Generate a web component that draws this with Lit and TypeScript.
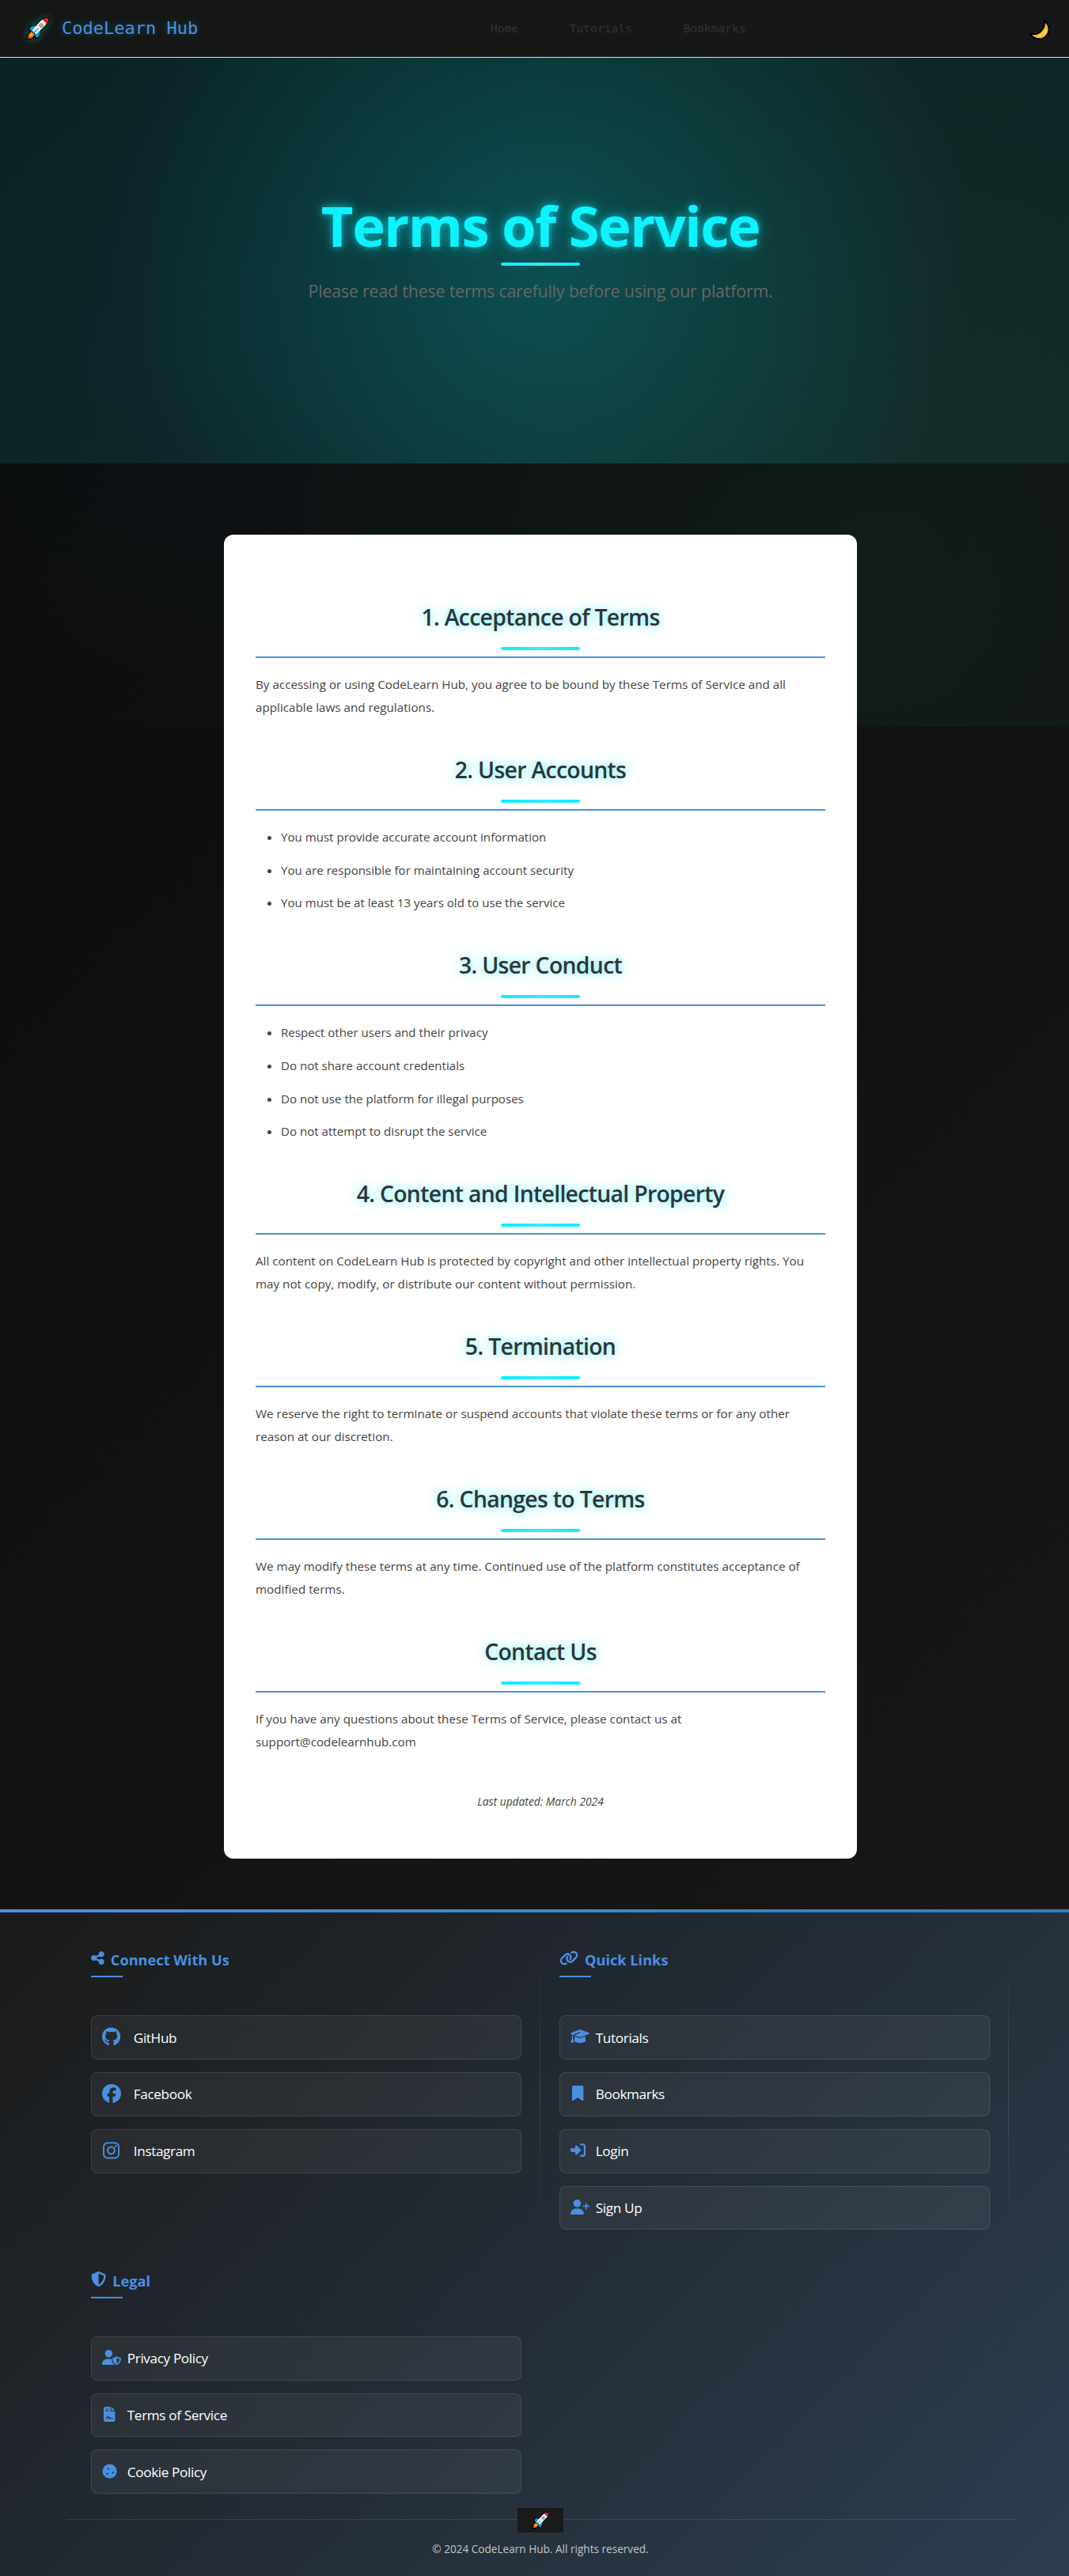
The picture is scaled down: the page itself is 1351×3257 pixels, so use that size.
import { LitElement, html, css, svg } from "lit";
import { customElement, property } from "lit/decorators.js";

interface Glyph {
  w: number;
  d: string;
}

const GLYPHS: Record<string, Glyph> = {
  share: {
    w: 448,
    d: "M352 224c53 0 96-43 96-96s-43-96-96-96s-96 43-96 96c0 4 .2 8 .7 11.9l-94.1 47C145.4 170.2 121.9 160 96 160c-53 0-96 43-96 96s43 96 96 96c25.9 0 49.4-10.2 66.6-26.9l94.1 47c-.5 3.9-.7 7.8-.7 11.9c0 53 43 96 96 96s96-43 96-96s-43-96-96-96c-25.9 0-49.4 10.2-66.6 26.9l-94.1-47c.5-3.9 .7-7.8 .7-11.9s-.2-8-.7-11.9l94.1-47C302.6 213.8 326.1 224 352 224z",
  },
  link: {
    w: 640,
    d: "M579.8 267.7c56.5-56.5 56.5-148 0-204.5c-50-50-128.8-56.5-186.3-15.4l-1.6 1.1c-14.4 10.3-17.7 30.3-7.4 44.6s30.3 17.7 44.6 7.4l1.6-1.1c32.1-22.9 76-19.3 103.8 8.6c31.5 31.5 31.5 82.5 0 114L422.3 334.8c-31.5 31.5-82.5 31.5-114 0c-27.9-27.9-31.5-71.8-8.6-103.8l1.1-1.6c10.3-14.4 6.9-34.4-7.4-44.6s-34.4-6.9-44.6 7.4l-1.1 1.6C206.5 251.2 213 330 263 380c56.5 56.5 148 56.5 204.5 0L579.8 267.7zM60.2 244.3c-56.5 56.5-56.5 148 0 204.5c50 50 128.8 56.5 186.3 15.4l1.6-1.1c14.4-10.3 17.7-30.3 7.4-44.6s-30.3-17.7-44.6-7.4l-1.6 1.1c-32.1 22.9-76 19.3-103.8-8.6C74 372 74 321 105.5 289.5L217.7 177.2c31.5-31.5 82.5-31.5 114 0c27.9 27.9 31.5 71.8 8.6 103.9l-1.1 1.6c-10.3 14.4-6.9 34.4 7.4 44.6s34.4 6.9 44.6-7.4l1.1-1.6C433.5 260.8 427 182 377 132c-56.5-56.5-148-56.5-204.5 0L60.2 244.3z",
  },
  shield: {
    w: 512,
    d: "M256 0c4.6 0 9.2 1 13.4 2.9L457.7 82.8c22 9.3 38.4 31 38.3 57.2c-.5 99.2-41.3 280.7-213.6 363.2c-16.7 8-36.1 8-52.8 0C57.3 420.7 16.5 239.2 16 140c-.1-26.2 16.3-47.9 38.3-57.2L242.7 2.9C246.8 1 251.4 0 256 0zm0 66.8V444.8C394 378 431.1 230.1 432 141.4L256 66.8l0 0z",
  },
  github: {
    w: 496,
    d: "M165.9 397.4c0 2-2.3 3.6-5.2 3.6-3.3.3-5.6-1.3-5.6-3.6 0-2 2.3-3.6 5.2-3.6 3-.3 5.6 1.3 5.6 3.6zm-31.1-4.5c-.7 2 1.3 4.3 4.3 4.9 2.6 1 5.6 0 6.2-2s-1.3-4.3-4.3-5.2c-2.6-.7-5.5.3-6.2 2.3zm44.2-1.7c-2.9.7-4.9 2.6-4.6 4.9.3 2 2.9 3.3 5.9 2.6 2.9-.7 4.9-2.6 4.6-4.6-.3-1.9-3-3.2-5.9-2.9zM244.8 8C106.1 8 0 113.3 0 252c0 110.9 69.8 205.8 169.5 239.2 12.8 2.3 17.3-5.6 17.3-12.1 0-6.2-.3-40.4-.3-61.4 0 0-70 15-84.7-29.8 0 0-11.4-29.1-27.8-36.6 0 0-22.9-15.7 1.6-15.4 0 0 24.9 2 38.6 25.8 21.9 38.6 58.6 27.5 72.9 20.9 2.3-16 8.8-27.1 16-33.7-55.9-6.2-112.3-14.3-112.3-110.5 0-27.5 7.6-41.3 23.6-58.9-2.6-6.5-11.1-33.3 2.6-67.9 20.9-6.5 69 27 69 27 20-5.6 41.5-8.5 62.8-8.5s42.8 2.9 62.8 8.5c0 0 48.1-33.6 69-27 13.7 34.7 5.2 61.4 2.6 67.9 16 17.7 25.8 31.5 25.8 58.9 0 96.5-58.9 104.2-114.8 110.5 9.2 7.9 17 22.9 17 46.4 0 33.7-.3 75.4-.3 83.6 0 6.5 4.6 14.4 17.3 12.1C428.2 457.8 496 362.9 496 252 496 113.3 383.5 8 244.8 8z",
  },
  facebook: {
    w: 512,
    d: "M512 256C512 114.6 397.4 0 256 0S0 114.6 0 256C0 376 82.7 476.8 194.2 504.5V334.2H141.4V256h52.8V222.3c0-87.1 39.4-127.5 125-127.5c16.2 0 44.2 3.2 55.7 6.4V172c-6-.6-16.5-1-29.6-1c-42 0-58.2 15.9-58.2 57.2V256h83.6l-14.4 78.2H287V510.1C413.8 494.8 512 386.9 512 256h0z",
  },
  instagram: {
    w: 448,
    d: "M224.1 141c-63.6 0-114.9 51.3-114.9 114.9s51.3 114.9 114.9 114.9S339 319.5 339 255.9 287.7 141 224.1 141zm0 189.6c-41.1 0-74.7-33.5-74.7-74.7s33.5-74.7 74.7-74.7 74.7 33.5 74.7 74.7-33.6 74.7-74.7 74.7zm146.4-194.3c0 14.9-12 26.8-26.8 26.8-14.9 0-26.8-12-26.8-26.8s12-26.8 26.8-26.8 26.8 12 26.8 26.8zm76.1 27.2c-1.7-35.9-9.9-67.7-36.2-93.9-26.2-26.2-58-34.4-93.9-36.2-37-2.1-147.9-2.1-184.9 0-35.8 1.7-67.6 9.9-93.9 36.1s-34.4 58-36.2 93.9c-2.1 37-2.1 147.9 0 184.9 1.7 35.9 9.9 67.7 36.2 93.9s58 34.4 93.9 36.2c37 2.1 147.9 2.1 184.9 0 35.9-1.7 67.7-9.9 93.9-36.2 26.2-26.2 34.4-58 36.2-93.9 2.1-37 2.1-147.8 0-184.8zM398.8 388c-7.8 19.6-22.9 34.7-42.6 42.6-29.5 11.7-99.5 9-132.1 9s-102.7 2.6-132.1-9c-19.6-7.8-34.7-22.9-42.6-42.6-11.7-29.5-9-99.5-9-132.1s-2.6-102.7 9-132.1c7.8-19.6 22.9-34.7 42.6-42.6 29.5-11.7 99.5-9 132.1-9s102.7-2.6 132.1 9c19.6 7.8 34.7 22.9 42.6 42.6 11.7 29.5 9 99.5 9 132.1s2.7 102.7-9 132.1z",
  },
  graduation: {
    w: 640,
    d: "M320 32c-8.1 0-16.1 1.4-23.7 4.1L15.8 137.4C6.3 140.9 0 149.9 0 160s6.3 19.1 15.8 22.6l57.9 20.9C57.3 229.3 48 259.8 48 291.9v28.1c0 28.4-10.8 57.7-22.3 80.8c-6.5 13-13.9 25.8-22.5 37.6C0 442.7-.9 448.3 .9 453.4s6 8.9 11.2 10.2l64 16c4.2 1.1 8.7 .3 12.4-2s6.3-6.1 7.1-10.4c8.6-42.8 4.3-81.2-2.1-108.7C90.3 344.3 86 329.8 80 316.5V291.9c0-30.2 10.2-58.7 27.9-81.5c12.9-15.5 29.6-28 49.2-35.7l157-61.7c8.2-3.2 17.5 .8 20.7 9s-.8 17.5-9 20.7l-157 61.7c-12.4 4.9-23.3 12.4-32.2 21.6l159.6 57.6c7.6 2.7 15.6 4.1 23.7 4.1s16.1-1.4 23.7-4.1L624.2 182.6c9.5-3.4 15.8-12.5 15.8-22.6s-6.3-19.1-15.8-22.6L343.7 36.1C336.1 33.4 328.1 32 320 32zM128 408c0 35.3 86 72 192 72s192-36.7 192-72L496.7 262.6 354.5 314c-11.1 4-22.8 6-34.5 6s-23.5-2-34.5-6L143.3 262.6 128 408z",
  },
  bookmark: {
    w: 384,
    d: "M0 48V487.7C0 501.1 10.9 512 24.3 512c5 0 9.9-1.5 14-4.4L192 400 345.7 507.6c4.1 2.9 9 4.4 14 4.4c13.4 0 24.3-10.9 24.3-24.3V48c0-26.5-21.5-48-48-48H48C21.5 0 0 21.5 0 48z",
  },
  login: {
    w: 512,
    d: "M217.9 105.9L340.7 228.7c7.2 7.2 11.3 17.1 11.3 27.3s-4.1 20.1-11.3 27.3L217.9 406.1c-6.4 6.4-15 9.9-24 9.9c-18.7 0-33.9-15.2-33.9-33.9l0-62.1L32 320c-17.7 0-32-14.3-32-32l0-64c0-17.7 14.3-32 32-32l128 0 0-62.1c0-18.7 15.2-33.9 33.9-33.9c9 0 17.6 3.6 24 9.9zM352 416l64 0c17.7 0 32-14.3 32-32l0-256c0-17.7-14.3-32-32-32l-64 0c-17.7 0-32-14.3-32-32s14.3-32 32-32l64 0c53 0 96 43 96 96l0 256c0 53-43 96-96 96l-64 0c-17.7 0-32-14.3-32-32s14.3-32 32-32z",
  },
  userPlus: {
    w: 640,
    d: "M96 128a128 128 0 1 1 256 0A128 128 0 1 1 96 128zM0 482.3C0 383.8 79.8 304 178.3 304h91.4C368.2 304 448 383.8 448 482.3c0 16.4-13.3 29.7-29.7 29.7H29.7C13.3 512 0 498.7 0 482.3zM504 312V248H440c-13.3 0-24-10.7-24-24s10.7-24 24-24h64V136c0-13.3 10.7-24 24-24s24 10.7 24 24v64h64c13.3 0 24 10.7 24 24s-10.7 24-24 24H552v64c0 13.3-10.7 24-24 24s-24-10.7-24-24z",
  },
  userShield: {
    w: 640,
    d: "M224 256A128 128 0 1 0 224 0a128 128 0 1 0 0 256zm-45.7 48C79.8 304 0 383.8 0 482.3C0 498.7 13.3 512 29.7 512H418.3c1.8 0 3.5-.2 5.3-.5c-76.3-55.1-99.8-141-103.1-200.2c-16.1-4.8-33.1-7.3-50.7-7.3H178.3zm308.8-78.3l-120 48C358 277.4 352 286.2 352 296c0 63.3 25.9 168.8 134.8 214.2c5.9 2.5 12.6 2.5 18.5 0C614.1 464.8 640 359.3 640 296c0-9.8-6-18.6-15.1-22.3l-120-48c-5.7-2.3-12.1-2.3-17.8 0zM591.4 312c-3.9 50.7-27.2 116.7-95.4 149.7V273.8L591.4 312z",
  },
  contract: {
    w: 384,
    d: "M64 0C28.7 0 0 28.7 0 64V448c0 35.3 28.7 64 64 64H320c35.3 0 64-28.7 64-64V160H256c-17.7 0-32-14.3-32-32V0H64zM256 0V128H384L256 0zM80 64h64c8.8 0 16 7.2 16 16s-7.2 16-16 16H80c-8.8 0-16-7.2-16-16s7.2-16 16-16zm0 64h64c8.8 0 16 7.2 16 16s-7.2 16-16 16H80c-8.8 0-16-7.2-16-16s7.2-16 16-16zm54.2 253.8c-6.1 20.3-24.8 34.2-46 34.2H80c-8.8 0-16-7.2-16-16s7.2-16 16-16h8.2c7.1 0 13.3-4.6 15.3-11.4l14.9-49.5c3.4-11.3 13.8-19.1 25.6-19.1s22.2 7.7 25.6 19.1l11.6 38.6c7.4-6.2 16.8-9.7 26.8-9.7c15.9 0 30.4 9 37.5 23.2l4.4 8.8H304c8.8 0 16 7.2 16 16s-7.2 16-16 16H240c-6.1 0-11.6-3.4-14.3-8.8l-8.8-17.7c-1.7-3.4-5.1-5.5-8.8-5.5s-7.2 2.1-8.8 5.5l-8.8 17.7c-2.9 5.9-9.2 9.4-15.7 8.8s-12.1-5.1-13.9-11.3L144 349l-9.8 32.8z",
  },
  cookie: {
    w: 512,
    d: "M247.2 17c-22.1-3.1-44.6 .9-64.4 11.4l-74 39.5C89.1 78.4 73.2 94.9 63.4 115L26.7 190.6c-9.8 20.1-13 42.9-9.1 64.9l14.5 82.8c3.9 22.1 14.6 42.3 30.7 57.9l60.3 58.4c16.1 15.6 36.6 25.6 58.7 28.7l83 11.7c22.1 3.1 44.6-.9 64.4-11.4l74-39.5c19.7-10.5 35.6-27 45.4-47.2l36.7-75.5c9.8-20.1 13-42.9 9.1-64.9l-14.6-82.8c-3.9-22.1-14.6-42.3-30.7-57.9L388.9 57.5c-16.1-15.6-36.6-25.6-58.7-28.7L247.2 17zM208 144a32 32 0 1 1 0 64 32 32 0 1 1 0-64zM144 336a32 32 0 1 1 64 0 32 32 0 1 1 -64 0zm224-64a32 32 0 1 1 0 64 32 32 0 1 1 0-64z",
  },
};

@customElement("fa-icon")
export class FaIcon extends LitElement {
  static styles = css`
    :host {
      display: block;
      flex: none;
    }
    .glyph {
      display: block;
      fill: #4a90e2;
    }
  `;

  @property() name = "share";
  @property({ type: Number }) size = 19.2;

  render() {
    const g = GLYPHS[this.name];
    return html`<svg
      class="glyph"
      width=${(g.w / 512) * this.size}
      height=${this.size}
      viewBox="0 0 ${g.w} 512"
    >
      ${svg`<path d=${g.d}></path>`}
    </svg>`;
  }
}

@customElement("rocket-icon")
export class RocketIcon extends LitElement {
  static styles = css`
    :host {
      display: block;
      flex: none;
    }
    .art {
      display: block;
    }
  `;

  @property({ type: Number }) size = 28;

  render() {
    return html`<svg class="art" width=${this.size} height=${this.size} viewBox="0 0 28 28">
      <g stroke="#000" stroke-width="2.4" stroke-linejoin="round">
        <path d="M27 1.2c-5-.2-9 1.600-11.500 5L11.500 11 5 11.200 2.800 15l3 2.200L1.600 22l-.6 5 5.200-.6 3.300-3.200 2.600 3.600 3.300-3.400.8-6.200 5-5.200C25 8.500 26.800 5.500 27 1.200z"></path>
      </g>
      <path d="M11.800 10.600 5.200 11.400 3 15l5 3.400z" fill="#00a1e0"></path>
      <path d="M17 16.800 15.500 23.300l-3.300 3L9.300 20.500z" fill="#00a1e0"></path>
      <path d="M6 17.200 1.800 21.800l-.6 4.900 5-.5 4-4.200z" fill="#f7630c"></path>
      <path d="M6 19.500 3.600 22.200l.2 2 2-.1 2.400-2.600z" fill="#ffb900"></path>
      <path d="M27 1.200c-5-.2-9 1.700-11.500 5L6.200 17l4.800 5L21.200 12.200C25 8.500 26.800 5.500 27 1.200z" fill="#f4f4f4"></path>
      <path d="M6.600 16.500 5.800 18.200l4.200 4.200 1.600-1z" fill="#4a4a52"></path>
      <path d="M27 1.200c-2.800-.1-5.200.4-7.200 1.400l5.600 5.800c1-2 1.500-4.400 1.600-7.200z" fill="#e81224"></path>
      <circle cx="18" cy="10.200" r="2.500" fill="#a8a8ac" stroke="#7c7c82" stroke-width=".6"></circle>
      <path d="M8.500 19.800 14 14.200" stroke="#00a1e0" stroke-width="1.300" stroke-linecap="round"></path>
    </svg>`;
  }
}

interface LinkItem {
  icon: string;
  label: string;
}

@customElement("footer-column")
export class FooterColumn extends LitElement {
  static styles = css`
    :host {
      display: block;
      position: relative;
    }
    .divider {
      position: absolute;
      top: 0;
      right: -24px;
      width: 1px;
      height: 100%;
      background: linear-gradient(
        to bottom,
        transparent,
        rgba(255, 255, 255, 0.12),
        transparent
      );
    }
    .title {
      display: flex;
      align-items: center;
      gap: 8px;
      height: 26px;
      margin: 0;
      font-size: 18.2px;
      font-weight: 700;
      line-height: 26px;
      color: #4a90e2;
      white-space: nowrap;
    }
    .title fa-icon {
      margin-top: -4px;
    }
    .rule {
      width: 40px;
      height: 2px;
      margin: 7px 0 48.2px;
      background: #4a90e2;
    }
    .links {
      display: flex;
      flex-direction: column;
      gap: 16px;
      margin: 0;
      padding: 0;
      list-style: none;
    }
    .link {
      display: flex;
      align-items: center;
      gap: 12.8px;
      box-sizing: border-box;
      height: 55.8px;
      padding: 0 12.8px;
      border: 1px solid rgba(255, 255, 255, 0.1);
      border-radius: 8px;
      background: rgba(255, 255, 255, 0.05);
      font-size: 17.2px;
      line-height: 26px;
      letter-spacing: -0.38px;
      color: #fff;
    }
    .link.social {
      gap: 16px;
    }
    .slot {
      display: flex;
      justify-content: safe center;
      width: 19.2px;
      margin-top: -2px;
    }
    .social .slot {
      width: 24px;
    }
    .label {
      margin-top: 1px;
    }
  `;

  @property() icon = "share";
  @property() heading = "";
  @property({ type: Boolean }) social = false;
  @property({ type: Boolean }) divided = false;
  @property({ attribute: false }) items: LinkItem[] = [];

  render() {
    return html`
      ${this.divided ? html`<div class="divider"></div>` : null}
      <h3 class="title"><fa-icon name=${this.icon}></fa-icon><span>${this.heading}</span></h3>
      <div class="rule"></div>
      <ul class="links">
        ${this.items.map(
          (i) => html`<li class="link ${this.social ? "social" : ""}">
            <span class="slot"
              ><fa-icon name=${i.icon} size=${this.social ? 24 : 19.2}></fa-icon
            ></span>
            <span class="label">${i.label}</span>
          </li>`
        )}
      </ul>
    `;
  }
}

interface Section {
  title: string;
  text?: string[];
  list?: string[];
}

const SECTIONS: Section[] = [
  {
    title: "1. Acceptance of Terms",
    text: [
      "By accessing or using CodeLearn Hub, you agree to be bound by these Terms of Service and all",
      "applicable laws and regulations.",
    ],
  },
  {
    title: "2. User Accounts",
    list: [
      "You must provide accurate account information",
      "You are responsible for maintaining account security",
      "You must be at least 13 years old to use the service",
    ],
  },
  {
    title: "3. User Conduct",
    list: [
      "Respect other users and their privacy",
      "Do not share account credentials",
      "Do not use the platform for illegal purposes",
      "Do not attempt to disrupt the service",
    ],
  },
  {
    title: "4. Content and Intellectual Property",
    text: [
      "All content on CodeLearn Hub is protected by copyright and other intellectual property rights. You",
      "may not copy, modify, or distribute our content without permission.",
    ],
  },
  {
    title: "5. Termination",
    text: [
      "We reserve the right to terminate or suspend accounts that violate these terms or for any other",
      "reason at our discretion.",
    ],
  },
  {
    title: "6. Changes to Terms",
    text: [
      "We may modify these terms at any time. Continued use of the platform constitutes acceptance of",
      "modified terms.",
    ],
  },
  {
    title: "Contact Us",
    text: [
      "If you have any questions about these Terms of Service, please contact us at",
      "support@codelearnhub.com",
    ],
  },
];

const SOCIAL: LinkItem[] = [
  { icon: "github", label: "GitHub" },
  { icon: "facebook", label: "Facebook" },
  { icon: "instagram", label: "Instagram" },
];
const QUICK: LinkItem[] = [
  { icon: "graduation", label: "Tutorials" },
  { icon: "bookmark", label: "Bookmarks" },
  { icon: "login", label: "Login" },
  { icon: "userPlus", label: "Sign Up" },
];
const LEGAL: LinkItem[] = [
  { icon: "userShield", label: "Privacy Policy" },
  { icon: "contract", label: "Terms of Service" },
  { icon: "cookie", label: "Cookie Policy" },
];

@customElement("app-root")
export class AppRoot extends LitElement {
  static styles = css`
    :host {
      display: block;
      overflow: hidden;
      font-family: "Open Sans", "Noto Sans", sans-serif;
    }
    .page {
      position: relative;
      width: 1366px;
      height: 3257px;
      background: linear-gradient(135deg, #0a0a0a 0%, #1a1a1a 100%);
    }
    .glow {
      position: absolute;
      top: 0;
      left: 0;
      width: 1366px;
      height: 919px;
      background: radial-gradient(circle at 20% 50%, rgba(0, 162, 255, 0.03), transparent 50%),
        radial-gradient(circle at 80% 80%, rgba(40, 255, 160, 0.05), transparent 62%);
    }
    .stack {
      position: relative;
      display: flex;
      flex-direction: column;
    }
    .header {
      display: grid;
      grid-template-columns: 586px auto 1fr;
      align-items: center;
      height: 72px;
      padding: 0 39px 0 34px;
      box-sizing: content-box;
      width: 1293px;
      border-bottom: 1px solid #e0e0e0;
      background: rgba(24, 26, 25, 0.85);
      font-family: "DejaVu Sans Mono", monospace;
    }
    .brand {
      display: flex;
      align-items: center;
      gap: 16px;
      font-size: 22px;
      line-height: 28px;
      color: #4a90e2;
      text-shadow: 0 0 10px rgba(0, 242, 255, 0.3);
    }
    .brand rocket-icon {
      filter: drop-shadow(0 0 5px rgba(0, 255, 170, 0.35));
    }
    .nav {
      display: flex;
      gap: 64.6px;
      font-size: 14.6px;
      line-height: 20px;
      color: #333;
    }
    .moon {
      display: block;
      justify-self: end;
      margin-top: 3px;
    }
    .hero {
      display: flex;
      flex-direction: column;
      align-items: center;
      box-sizing: border-box;
      height: 513px;
      padding-top: 170px;
      background: radial-gradient(circle at center, rgba(0, 242, 255, 0.2), transparent 75%),
        linear-gradient(135deg, rgba(0, 242, 255, 0.1), rgba(40, 232, 235, 0.09));
    }
    .hero-title {
      margin: 0;
      font-size: 70.5px;
      line-height: 85px;
      font-weight: 700;
      letter-spacing: -1.5px;
      white-space: nowrap;
      color: #0ff2ff;
      text-shadow: 0 0 10px rgba(0, 242, 255, 0.55), 0 0 20px rgba(0, 242, 255, 0.4);
    }
    .bar {
      width: 100px;
      height: 4px;
      border-radius: 2px;
      background: linear-gradient(90deg, #00f2ff, #38e8ff, #00f2ff);
    }
    .hero .bar {
      margin-top: 4px;
    }
    .hero-text {
      margin: 16.5px 0 0;
      font-size: 21.4px;
      line-height: 30px;
      letter-spacing: -0.2px;
      color: #666;
      white-space: nowrap;
    }
    .card {
      box-sizing: border-box;
      width: 800px;
      height: 1674px;
      margin: 90px auto 64px;
      padding: 84px 40px 0;
      border-radius: 12px;
      background: #fff;
      color: #444;
    }
    .section-title {
      display: flex;
      flex-direction: column;
      align-items: center;
      gap: 18px;
      margin: 0 0 19px;
      padding-bottom: 8px;
      border-bottom: 2px solid #4a90e2;
      font-size: 28.4px;
      line-height: 40px;
      font-weight: 600;
      letter-spacing: -0.7px;
      color: #333;
      text-shadow: 0 0 10px rgba(0, 242, 255, 0.5), 0 0 20px rgba(0, 242, 255, 0.3);
      white-space: nowrap;
    }
    .text {
      margin: 0 0 44.4px;
      font-size: 15.22px;
      line-height: 28.8px;
      white-space: nowrap;
    }
    .line {
      display: block;
    }
    .list {
      margin: 0 0 44.4px;
      padding-left: 32px;
      font-size: 15.1px;
      line-height: 28.8px;
    }
    .list li {
      margin-bottom: 12.8px;
    }
    .updated {
      margin: 49px 0 0;
      font-size: 13.8px;
      line-height: 24px;
      font-style: italic;
      text-align: center;
    }
    .footer {
      border-top: 4px solid;
      border-image: linear-gradient(90deg, #4a90e2, #357abd) 1;
      background: linear-gradient(135deg, #1a1a1a 0%, #2c3e50 100%);
      height: 839px;
    }
    .columns {
      display: grid;
      grid-template-columns: 544px 544px;
      gap: 51.2px 48px;
      width: 1136px;
      margin: 0 auto;
      padding-top: 47px;
    }
    .bottom {
      position: relative;
      width: 1200px;
      margin: 31.8px auto 0;
      padding-top: 26px;
      border-top: 1px solid rgba(255, 255, 255, 0.1);
      text-align: center;
      font-size: 13.6px;
      line-height: 22px;
      color: #c4c6c9;
    }
    .badge {
      position: absolute;
      top: -15px;
      left: 571px;
      display: flex;
      align-items: center;
      justify-content: center;
      width: 58px;
      height: 31px;
      background: #1a1a1a;
    }
  `;

  render() {
    return html`
      <div class="page">
        <div class="glow"></div>
        <div class="stack">
          <header class="header">
            <div class="brand"><rocket-icon size="28"></rocket-icon><span>CodeLearn Hub</span></div>
            <nav class="nav"><span>Home</span><span>Tutorials</span><span>Bookmarks</span></nav>
            <svg class="moon" width="26" height="27" viewBox="0 0 26 27">
              <path
                d="M19.200 2.200c4.600 3.800 6.600 9.800 4.400 15.300-2.900 7-10.800 9.500-17 6.500-2.400-1.200-4.400-3-5.200-5.400 6 1.600 11.400-.6 14.600-4.800 2.800-3.700 3.700-7.400 3.200-11.600z"
                fill="#ffc83d"
                stroke="#000"
                stroke-width="2"
                stroke-linejoin="round"
              ></path>
              <circle cx="20.500" cy="11" r="1.500" fill="#f2a427"></circle>
              <circle cx="9.500" cy="22" r="1.200" fill="#f2a427"></circle>
              <path d="M13.500 23.500a2.400 2.400 0 0 1 4-.8c-1 1.200-2.500 1.800-4 2z" fill="#f2a427"></path>
            </svg>
          </header>

          <section class="hero">
            <h1 class="hero-title">Terms of Service</h1>
            <div class="bar"></div>
            <p class="hero-text">Please read these terms carefully before using our platform.</p>
          </section>

          <main class="card">
            ${SECTIONS.map(
              (s) => html`
                <h2 class="section-title"><span>${s.title}</span><span class="bar"></span></h2>
                ${s.text
                  ? html`<p class="text">
                      ${s.text.map((t) => html`<span class="line">${t}</span>`)}
                    </p>`
                  : html`<ul class="list">
                      ${s.list!.map((t) => html`<li>${t}</li>`)}
                    </ul>`}
              `
            )}
            <p class="updated">Last updated: March 2024</p>
          </main>

          <footer class="footer">
            <div class="columns">
              <footer-column
                icon="share"
                heading="Connect With Us"
                social
                divided
                .items=${SOCIAL}
              ></footer-column>
              <footer-column
                icon="link"
                heading="Quick Links"
                divided
                .items=${QUICK}
              ></footer-column>
              <footer-column icon="shield" heading="Legal" .items=${LEGAL}></footer-column>
            </div>
            <div class="bottom">
              <div class="badge"><rocket-icon size="21"></rocket-icon></div>
              © 2024 CodeLearn Hub. All rights reserved.
            </div>
          </footer>
        </div>
      </div>
    `;
  }
}
